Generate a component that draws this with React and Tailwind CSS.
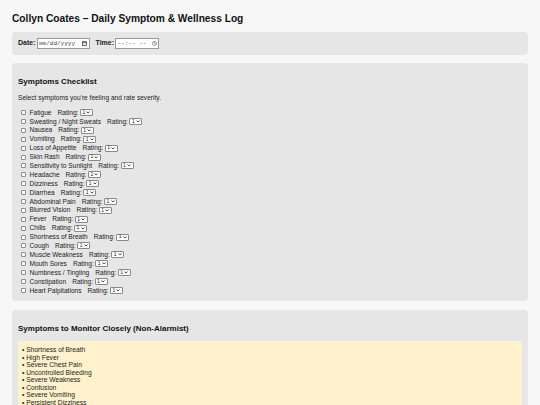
import { useState } from "react";

const symptoms = [
  "Fatigue", "Sweating / Night Sweats", "Nausea", "Vomiting", "Loss of Appetite",
  "Skin Rash", "Sensitivity to Sunlight", "Headache", "Dizziness", "Diarrhea",
  "Abdominal Pain", "Blurred Vision", "Fever", "Chills", "Shortness of Breath",
  "Cough", "Muscle Weakness", "Mouth Sores", "Numbness / Tingling", "Constipation",
  "Heart Palpitations",
];

const watchList = [
  "Shortness of Breath", "High Fever", "Severe Chest Pain", "Uncontrolled Bleeding",
  "Severe Weakness", "Confusion", "Severe Vomiting", "Persistent Dizziness",
];

const CalendarIcon = () => (
  <svg width="5" height="5" viewBox="0 0 10 10" fill="none" stroke="#222" strokeWidth="1.4">
    <rect x="1" y="1.5" width="8" height="7.5" />
    <line x1="1" y1="3.5" x2="9" y2="3.5" />
  </svg>
);

const ClockIcon = () => (
  <svg width="5" height="5" viewBox="0 0 10 10" fill="none" stroke="#444" strokeWidth="1.1">
    <circle cx="5" cy="5" r="4" />
    <path d="M5 2.6V5h1.8" />
  </svg>
);

const Chevron = () => (
  <svg width="4" height="3" viewBox="0 0 8 6" fill="none" stroke="#222" strokeWidth="1.6">
    <path d="M1 1l3 3 3-3" />
  </svg>
);

const SymptomRow = ({ name, checked, onToggle }) => (
  <div className="flex h-[8.9px] items-center">
    <span
      onClick={onToggle}
      className={`ml-[3px] mr-[3px] h-[5px] w-[5px] rounded-[1px] border-[0.7px] border-[#8a8a8a] ${checked ? "bg-[#2563eb]" : "bg-white"}`}
    />
    <span className="ml-[0.5px]">{name}</span>
    <span className="ml-[6px]">Rating:</span>
    <span className="ml-[1.5px] flex h-[7px] w-[13px] items-center justify-between rounded-[1px] border-[0.7px] border-[#8a8a8a] bg-white px-[1.5px] text-[5px]">
      1
      <Chevron />
    </span>
  </div>
);

export default function App() {
  const [checked, setChecked] = useState({});

  return (
    <div className="min-h-screen bg-[#f7f7f7] px-3 pt-[12px] pb-6 font-['Liberation_Sans',Arial,sans-serif] text-[#222]">
      <h1 className="text-[10.2px] font-bold leading-[14px] text-[#111]">
        Collyn Coates – Daily Symptom &amp; Wellness Log
      </h1>

      <div className="mt-[6px] flex h-[23px] items-center rounded bg-[#e6e6e6] px-[6px] text-[7px]">
        <span className="font-bold">Date:</span>
        <span className="ml-[1px] flex h-[11px] w-[53px] items-center justify-between border-[0.7px] border-[#9a9a9a] bg-white px-[1.5px] font-['Liberation_Mono',monospace] text-[6px] text-[#444]">
          mm/dd/yyyy
          <CalendarIcon />
        </span>
        <span className="ml-[6px] font-bold">Time:</span>
        <span className="ml-[1px] flex h-[11px] w-[44px] items-center justify-between border-[0.7px] border-[#9a9a9a] bg-white px-[1.5px] font-['Liberation_Mono',monospace] text-[6px] text-[#444]">
          --:-- --
          <ClockIcon />
        </span>
      </div>

      <div className="mt-2 rounded bg-[#e6e6e6] px-[6px] pt-[14px] pb-[6px] text-[6.6px]">
        <h2 className="text-[8px] font-bold leading-[10px] text-[#111]">Symptoms Checklist</h2>
        <p className="mt-[6.5px] leading-[8px]">Select symptoms you're feeling and rate severity.</p>
        <div className="mt-[6.7px] flex flex-col">
          {symptoms.map((s) => (
            <SymptomRow
              key={s}
              name={s}
              checked={!!checked[s]}
              onToggle={() => setChecked({ ...checked, [s]: !checked[s] })}
            />
          ))}
        </div>
      </div>

      <div className="mt-[9px] rounded bg-[#e6e6e6] px-[6px] pt-[14px] pb-[6px]">
        <h2 className="text-[8px] font-bold leading-[10px] text-[#111]">
          Symptoms to Monitor Closely (Non-Alarmist)
        </h2>
        <div className="mt-[7px] rounded-[3px] bg-[#fff2cc] px-[4px] pt-[5.5px] pb-[4px] text-[6.7px] leading-[7.5px]">
          {watchList.map((w) => (
            <div key={w}>• {w}</div>
          ))}
        </div>
      </div>
    </div>
  );
}
